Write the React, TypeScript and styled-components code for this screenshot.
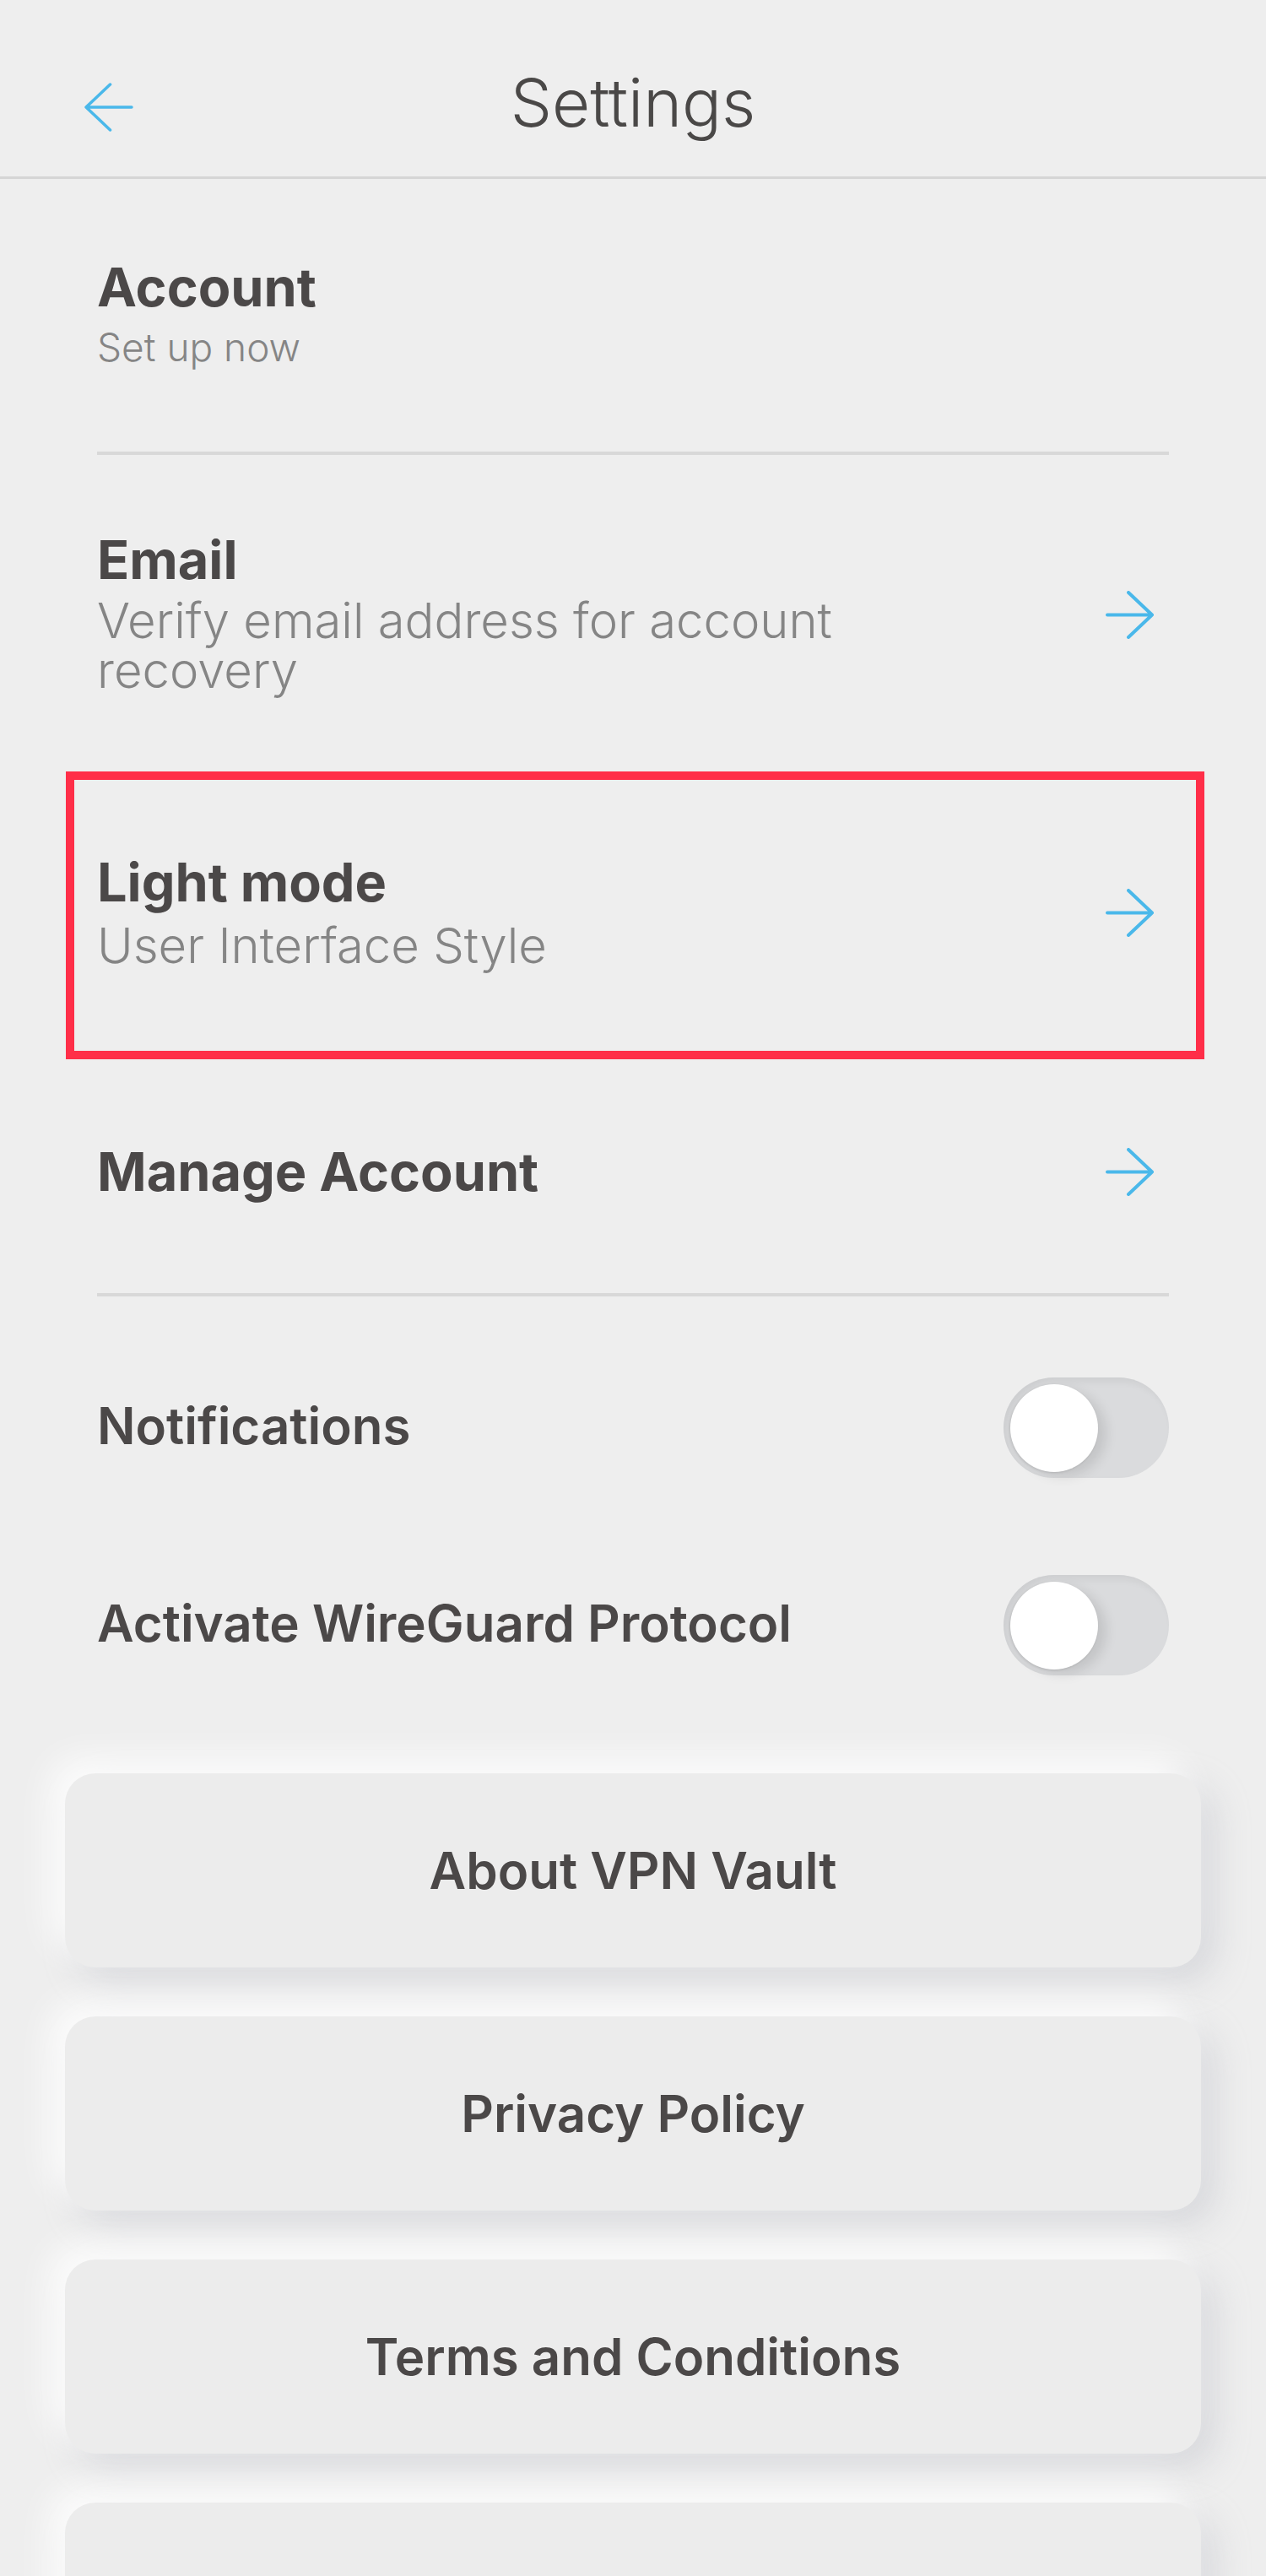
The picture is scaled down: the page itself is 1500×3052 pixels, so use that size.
import React, { useState } from "react";
import styled, { createGlobalStyle } from "styled-components";

const GlobalStyle = createGlobalStyle`
  html, body { margin: 0; padding: 0; background: #eeeeee; }
  * { box-sizing: border-box; }
`;

const Page = styled.div`
  min-height: 100vh;
  background: #eeeeee;
  font-family: Inter, "Noto Sans", "Liberation Sans", sans-serif;
  color: #4b4848;
  overflow: hidden;
`;

const Header = styled.header`
  height: 212px;
  border-bottom: 3px solid #d5d5d5;
  display: grid;
  grid-template-columns: 1fr auto 1fr;
  align-items: start;
  padding-top: 83px;
`;

const BackButton = styled.button`
  justify-self: start;
  margin-left: 100px;
  margin-top: 15px;
  width: 60px;
  height: 60px;
  padding: 0;
  border: 0;
  background: none;
  display: flex;
  cursor: pointer;
`;

const HeaderTitle = styled.h1`
  margin: 0;
  font-size: 78px;
  line-height: 1;
  font-weight: 300;
  color: #4a4847;
`;

const List = styled.section`
  padding: 0 115px;
  display: flex;
  flex-direction: column;
`;

const Row = styled.div<{ $pt: number; $pb: number }>`
  display: flex;
  align-items: center;
  justify-content: space-between;
  padding: ${(p) => p.$pt}px 18px ${(p) => p.$pb}px 0;
`;

const HighlightRow = styled(Row)`
  margin: 0 -42px 0 -37px;
  border: 10px solid #ff2e48;
  padding-left: 27px;
  padding-right: 50px;
`;

const TextCol = styled.div<{ $gap: number }>`
  display: flex;
  flex-direction: column;
  gap: ${(p) => p.$gap}px;
  max-width: 1000px;
`;

const Title = styled.div`
  font-size: 63px;
  line-height: 1;
  font-weight: 700;
  color: #4b4848;
`;

const Subtitle = styled.div<{ $size: number; $lh: number }>`
  font-size: ${(p) => p.$size}px;
  line-height: ${(p) => p.$lh}px;
  font-weight: 300;
  color: #858585;
`;

const Divider = styled.hr`
  margin: 0;
  border: 0;
  height: 4px;
  background: #d8d8d8;
`;

const ToggleList = styled.div`
  display: flex;
  flex-direction: column;
  gap: 115px;
  padding-top: 96px;
`;

const ToggleRow = styled.label`
  display: flex;
  align-items: center;
  justify-content: space-between;
  height: 119px;
`;

const ToggleLabel = styled.span`
  font-size: 60px;
  line-height: 1;
  font-weight: 600;
  color: #4b4848;
  margin-top: -6px;
`;

const Track = styled.button<{ $on: boolean }>`
  width: 196px;
  height: 119px;
  border-radius: 60px;
  border: 0;
  padding: 8px;
  display: flex;
  justify-content: ${(p) => (p.$on ? "flex-end" : "flex-start")};
  align-items: center;
  background: ${(p) => (p.$on ? "#4ab8ea" : "#dadbdd")};
  box-shadow: inset 5px 5px 10px rgba(0, 0, 0, 0.06);
  cursor: pointer;
`;

const Knob = styled.span`
  width: 104px;
  height: 104px;
  border-radius: 50%;
  background: #ffffff;
  box-shadow: 10px 6px 14px rgba(0, 0, 0, 0.1), -1px 1px 3px rgba(0, 0, 0, 0.12);
`;

const ButtonStack = styled.nav`
  display: flex;
  flex-direction: column;
  gap: 58px;
  padding: 0 77px 80px;
  margin-top: 116px;
`;

const NavButton = styled.button`
  height: 230px;
  border: 0;
  border-radius: 36px;
  background: #ececec;
  box-shadow: -18px -18px 40px rgba(255, 255, 255, 0.85),
    16px 16px 40px rgba(175, 178, 188, 0.38);
  font-family: Inter, "Noto Sans", "Liberation Sans", sans-serif;
  font-size: 60px;
  line-height: 1;
  font-weight: 600;
  color: #4b4848;
  cursor: pointer;
`;

const ArrowSvg = styled.svg<{ $flip?: boolean }>`
  flex: none;
  transform: ${(p) => (p.$flip ? "scaleX(-1)" : "none")};
`;

function Arrow({ flip, size = 57, stroke = 4 }: { flip?: boolean; size?: number; stroke?: number }) {
  return (
    <ArrowSvg $flip={flip} width={size} height={size} viewBox="0 0 57 57" fill="none">
      <path
        d="M2 28.5 H55 M27 2 L55 28.5 L27 55"
        stroke="#4ab8ea"
        strokeWidth={stroke}
        strokeLinecap="round"
        strokeLinejoin="round"
      />
    </ArrowSvg>
  );
}

function Toggle() {
  const [on, setOn] = useState(false);
  return (
    <Track $on={on} onClick={() => setOn(!on)} aria-pressed={on}>
      <Knob />
    </Track>
  );
}

export default function App() {
  return (
    <Page>
      <GlobalStyle />
      <Header>
        <BackButton aria-label="Back">
          <Arrow flip size={58} stroke={3.5} />
        </BackButton>
        <HeaderTitle>Settings</HeaderTitle>
        <span />
      </Header>
      <List>
        <Row $pt={97} $pb={101}>
          <TextCol $gap={16}>
            <Title>Account</Title>
            <Subtitle $size={46} $lh={46}>Set up now</Subtitle>
          </TextCol>
        </Row>
        <Divider />
        <Row $pt={93} $pb={90}>
          <TextCol $gap={11}>
            <Title>Email</Title>
            <Subtitle $size={58} $lh={59}>Verify email address for account recovery</Subtitle>
          </TextCol>
          <Arrow />
        </Row>
        <HighlightRow $pt={90} $pb={96}>
          <TextCol $gap={14}>
            <Title>Light mode</Title>
            <Subtitle $size={58} $lh={58}>User Interface Style</Subtitle>
          </TextCol>
          <Arrow />
        </HighlightRow>
        <Row $pt={102} $pb={112}>
          <TextCol $gap={0}>
            <Title>Manage Account</Title>
          </TextCol>
          <Arrow />
        </Row>
        <Divider />
        <ToggleList>
          <ToggleRow>
            <ToggleLabel>Notifications</ToggleLabel>
            <Toggle />
          </ToggleRow>
          <ToggleRow>
            <ToggleLabel>Activate WireGuard Protocol</ToggleLabel>
            <Toggle />
          </ToggleRow>
        </ToggleList>
      </List>
      <ButtonStack>
        <NavButton>About VPN Vault</NavButton>
        <NavButton>Privacy Policy</NavButton>
        <NavButton>Terms and Conditions</NavButton>
        <NavButton aria-label="More" />
      </ButtonStack>
    </Page>
  );
}
